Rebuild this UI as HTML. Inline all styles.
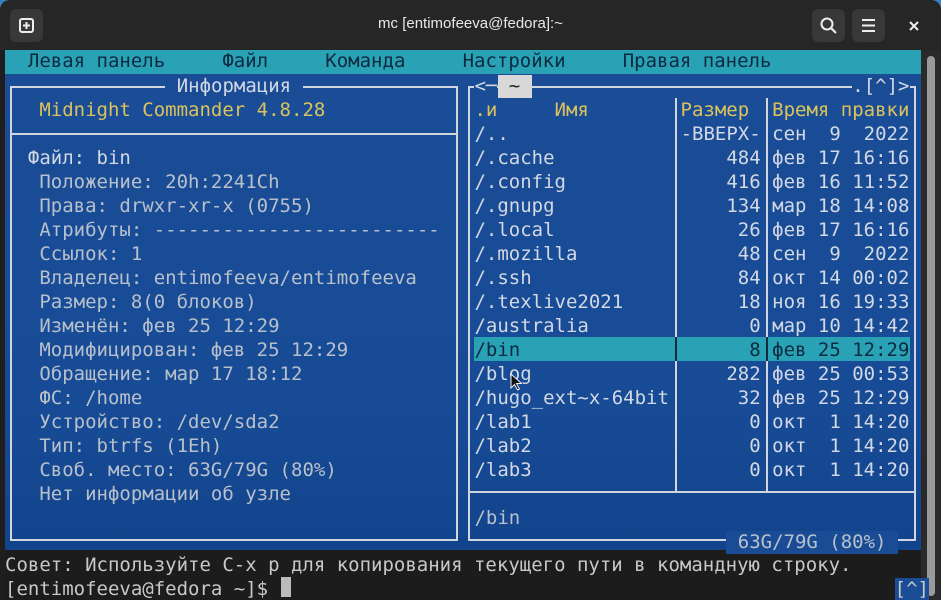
<!DOCTYPE html>
<html><head><meta charset="utf-8">
<style>
*{margin:0;padding:0;box-sizing:border-box}
body{width:941px;height:587px;overflow:hidden;background:#3a7fc0;position:relative;font-family:"DejaVu Sans Mono","Liberation Mono",monospace}
#win{position:absolute;left:0;top:0;width:941px;height:600px;background:#1e1e1e;border-radius:10px 10px 0 0;overflow:hidden}
#tb{position:absolute;left:0;top:0;width:941px;height:50px;background:#262626}
.btn{position:absolute;top:9px;width:33px;height:33px;border-radius:6px;background:#383838}
#title{position:absolute;left:0;width:941px;top:15px;text-align:center;color:#e8e8e8;font:15px "Liberation Sans","DejaVu Sans",sans-serif}
#menu{position:absolute;left:5px;top:50px;width:916px;height:24px;background:#2aa2b5}
#blue{position:absolute;left:5px;top:74px;width:916px;height:476px;background:linear-gradient(#1b4d97,#174b95 70%,#12448c)}
#hint{position:absolute;left:5px;top:550px;width:916px;height:50px;background:#1c1c1c}
#sb{position:absolute;left:921px;top:50px;width:20px;height:550px;background:#2a2a2a}
#thumb{position:absolute;left:927px;top:56px;width:8px;height:540px;border-radius:4px;background:#9a9a9a}
.t{position:absolute;left:calc(5px + var(--c)*11.45px);top:calc(51.5px + var(--r)*23.95px);font-size:19px;line-height:23.95px;white-space:pre;color:#d2d8e4}
.m{color:#0d2a40}
.y{color:#dcc25c}
.g{color:#b8c0cc}
.bx{position:absolute;border:2px solid #cfd6e0}
.hl{position:absolute;background:#d8d8d8}
.ln{position:absolute;background:#cfd6e0}
.sz{width:80.15px;text-align:right}
.bg{background:#1a4c96}
</style></head><body>
<div id="win">
<div id="tb">
 <div class="btn" style="left:10px"><svg width="33" height="33" viewBox="0 0 33 33"><rect x="10" y="10" width="13" height="13" rx="2" fill="none" stroke="#eee" stroke-width="2"/><path d="M16.5 13v7M13 16.5h7" stroke="#eee" stroke-width="2"/></svg></div>
 <div id="title">mc [entimofeeva@fedora]:~</div>
 <div class="btn" style="left:812px"><svg width="33" height="33" viewBox="0 0 33 33"><circle cx="15" cy="15" r="5.5" fill="none" stroke="#eee" stroke-width="2"/><path d="M19 19l5 5" stroke="#eee" stroke-width="2.2"/></svg></div>
 <div class="btn" style="left:852px"><svg width="33" height="33" viewBox="0 0 33 33"><path d="M10 11h13M10 16.5h13M10 22h13" stroke="#eee" stroke-width="2"/></svg></div>
 <svg style="position:absolute;left:908px;top:20px" width="12" height="12" viewBox="0 0 12 12"><path d="M2 2l8 8M10 2l-8 8" stroke="#eee" stroke-width="2"/></svg>
</div>
<div id="menu"></div>
<div id="blue"></div>
<div id="hint"></div>
<div id="sb"></div><div id="thumb"></div>

<!-- frames -->
<div class="bx" style="left:10px;top:86px;width:448px;height:455px"></div>
<div class="ln" style="left:10px;top:133px;width:448px;height:2px"></div>
<div class="bx" style="left:468px;top:86px;width:448px;height:455px"></div>
<div class="ln" style="left:468px;top:491px;width:448px;height:2px"></div>
<div class="ln" style="left:675px;top:98px;width:2px;height:393px"></div>
<div class="ln" style="left:766px;top:98px;width:2px;height:393px"></div>

<!-- bin highlight -->
<div style="position:absolute;left:474px;top:337px;width:436px;height:24px;background:#2aa2b5"></div>
<div style="position:absolute;left:675px;top:337px;width:2px;height:24px;background:#0d2a40"></div>
<div style="position:absolute;left:766px;top:337px;width:2px;height:24px;background:#0d2a40"></div>

<!-- menu -->
<div class="t m" style="--c:2;--r:0;top:50px">Левая панель     Файл     Команда     Настройки     Правая панель</div>

<!-- left panel -->
<div class="t bg" style="--c:14;--r:1"> Информация </div>
<div class="t y" style="--c:3;--r:2">Midnight Commander 4.8.28</div>
<div class="t" style="--c:2;--r:4">Файл: bin</div>
<div class="t g" style="--c:3;--r:5">Положение: 20h:2241Ch
Права: drwxr-xr-x (0755)
Атрибуты: -------------------------
Ссылок: 1
Владелец: entimofeeva/entimofeeva
Размер: 8(0 блоков)
Изменён: фев 25 12:29
Модифицирован: фев 25 12:29
Обращение: мар 17 18:12
ФС: /home
Устройство: /dev/sda2
Тип: btrfs (1Eh)
Своб. место: 63G/79G (80%)
Нет информации об узле</div>

<!-- right panel header -->
<div class="t bg" style="--c:41;--r:1">&lt;─</div>
<div class="hl" style="left:498px;top:75px;width:34px;height:23px"></div>
<div class="t" style="--c:44;--r:1;color:#222">~</div>
<div class="t bg" style="--c:74;--r:1">.[^]&gt;</div>
<div class="t y" style="--c:41;--r:2">.и     Имя</div>
<div class="t y" style="--c:59;--r:2">Размер</div>
<div class="t y" style="--c:67;--r:2">Время правки</div>

<div class="t" style="--c:41;--r:3">/..
/.cache
/.config
/.gnupg
/.local
/.mozilla
/.ssh
/.texlive2021
/australia
<span class="m">/bin</span>
/blog
/hugo_ext~x-64bit
/lab1
/lab2
/lab3</div>
<div class="t sz" style="--c:59;--r:3">-ВВЕРХ-
484
416
134
26
48
84
18
0
<span class="m">8</span>
282
32
0
0
0</div>
<div class="t" style="--c:67;--r:3">сен  9  2022
фев 17 16:16
фев 16 11:52
мар 18 14:08
фев 17 16:16
сен  9  2022
окт 14 00:02
ноя 16 19:33
мар 10 14:42
<span class="m">фев 25 12:29</span>
фев 25 00:53
фев 25 12:29
окт  1 14:20
окт  1 14:20
окт  1 14:20</div>
<div class="t g" style="--c:41;--r:19">/bin</div>
<div class="t g bg" style="--c:63;--r:20"> 63G/79G (80%) </div>

<svg style="position:absolute;left:510px;top:373px" width="12" height="18" viewBox="0 0 12 18"><path d="M1 1v14l3.5-3.5 3 5.5 2-1-3-5.5h5z" fill="#111" stroke="#eee" stroke-width="1"/></svg>

<div class="t" style="--c:0;--r:21;color:#c8c8c8">Совет: Используйте C-x p для копирования текущего пути в командную строку.</div>
<div class="t" style="--c:0;--r:22;color:#c8c8c8">[entimofeeva@fedora ~]$ </div>
<div style="position:absolute;left:281px;top:577px;width:10px;height:20px;background:#bbb"></div>
<div class="t" style="--c:77.7;--r:22;background:#1b4d97;color:#c8c8c8">[^]</div>
</div>
</body></html>
